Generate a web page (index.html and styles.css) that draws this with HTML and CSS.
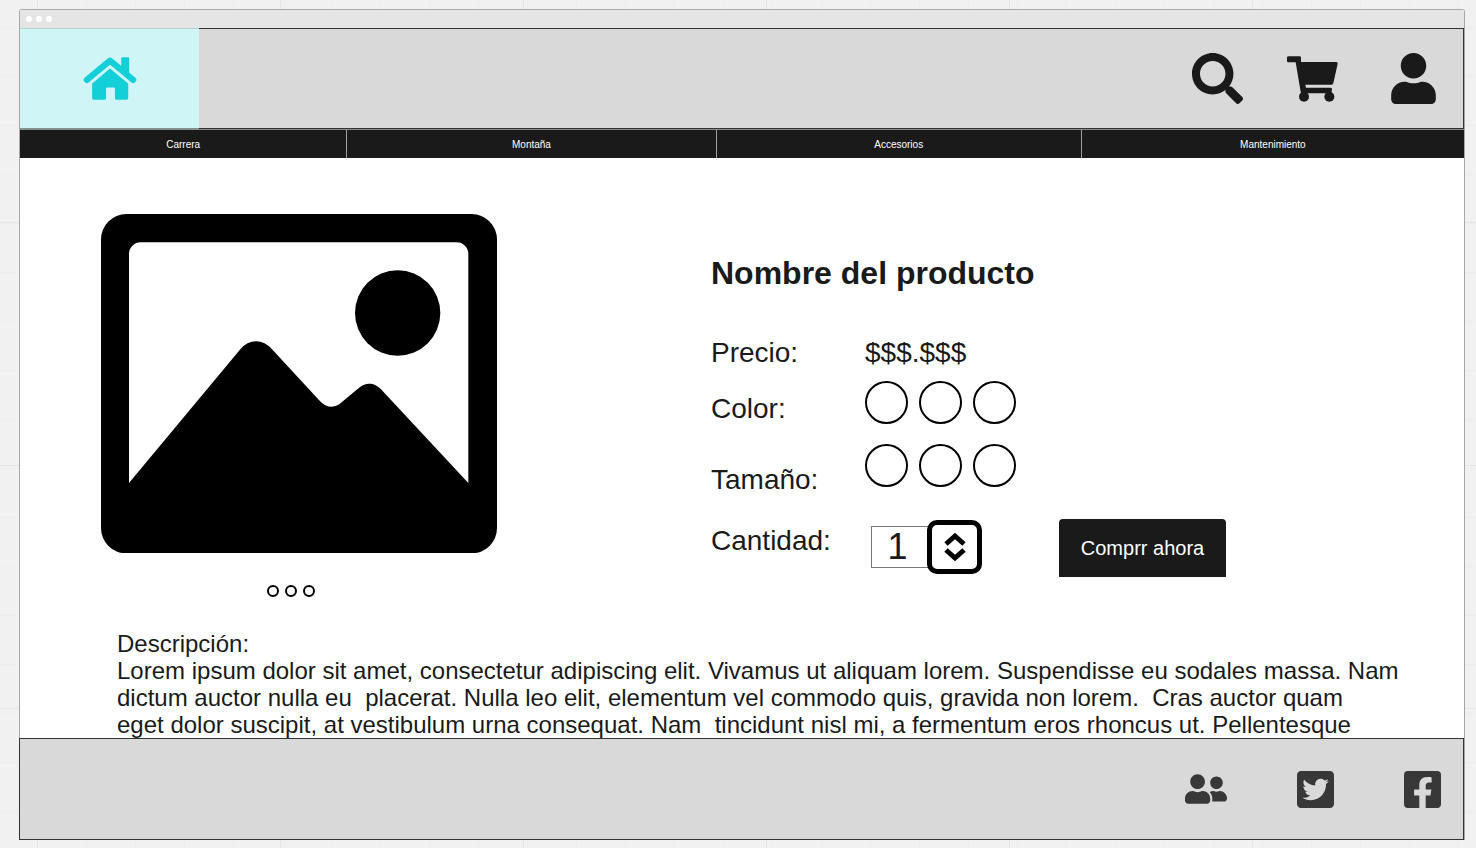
FILE: index.html
```html
<!DOCTYPE html>
<html lang="es">
<head>
<meta charset="utf-8">
<meta name="viewport" content="width=device-width, initial-scale=1">
<title>Nombre del producto</title>
<link rel="stylesheet" href="styles.css">
</head>
<body>
<div class="window">
  <div class="titlebar"><i></i><i></i><i></i></div>

  <header class="header">
    <a class="home" href="#" aria-label="Inicio">
      <svg viewBox="0 0 162 130" width="54" height="43">
        <g fill="#13cfd7">
          <path d="M11 69 81 11l70 58" fill="none" stroke="#13cfd7" stroke-width="19" stroke-linecap="round" stroke-linejoin="round"/>
          <path d="M115 4q0-3 3-3h18q3 0 3 3v54l-24-20z"/>
          <path d="M81 35 136 80v44q0 5-5 5h-31q-4 0-4-4V96q0-4-4-4H73q-4 0-4 4v29q0 4-4 4H32q-5 0-5-5V80z"/>
        </g>
      </svg>
    </a>
    <div class="actions">
      <button class="icon-button" type="button" aria-label="Buscar">
        <svg viewBox="0 0 512 512" width="51" height="51"><path d="M505 442.7L405.3 343c-4.500-4.500-10.600-7-17-7H372c27.600-35.300 44-79.700 44-128C416 93.100 322.900 0 208 0S0 93.100 0 208s93.100 208 208 208c48.300 0 92.700-16.400 128-44v16.300c0 6.400 2.500 12.500 7 17l99.700 99.700c9.400 9.400 24.600 9.400 33.900 0l28.300-28.300c9.400-9.400 9.400-24.600.1-34zM208 336c-70.700 0-128-57.200-128-128 0-70.700 57.200-128 128-128 70.700 0 128 57.200 128 128 0 70.700-57.200 128-128 128z"/></svg>
      </button>
      <button class="icon-button cart" type="button" aria-label="Carrito">
        <svg viewBox="0 0 153 138" width="51" height="46">
          <path d="M4 1h34q4 0 4 4v13h106q5 0 4 5l-13 59q-1 4-5 4H55l2 9h74q5 0 4 5l-2 12H46q-4 0-5-4L26 19H4q-4 0-4-4V5q0-4 4-4z"/>
          <circle cx="51" cy="122" r="15"/><circle cx="127" cy="122" r="15"/>
        </svg>
      </button>
      <button class="icon-button" type="button" aria-label="Cuenta">
        <svg viewBox="0 0 448 512" width="45" height="51"><path d="M224 256c70.700 0 128-57.300 128-128S294.700 0 224 0 96 57.300 96 128s57.300 128 128 128zm89.600 32h-16.700c-22.200 10.200-46.900 16-72.900 16s-50.600-5.800-72.900-16h-16.700C60.200 288 0 348.200 0 422.400V464c0 26.500 21.500 48 48 48h352c26.500 0 48-21.500 48-48v-41.600c0-74.200-60.200-134.400-134.400-134.400z"/></svg>
      </button>
    </div>
  </header>

  <nav class="nav">
    <a class="nav-carrera" href="#">Carrera</a>
    <a class="nav-montana" href="#">Montaña</a>
    <a class="nav-accesorios" href="#">Accesorios</a>
    <a class="nav-mantenimiento" href="#">Mantenimiento</a>
  </nav>

  <main class="main">
    <section class="product">
      <div class="gallery">
        <svg class="photo" viewBox="0 0 1188 1018" role="img" aria-label="Imagen del producto">
          <path fill-rule="evenodd" d="M76 0H1112A76 76 0 0 1 1188 76V942A76 76 0 0 1 1112 1018H76A76 76 0 0 1 0 942V76A76 76 0 0 1 76 0ZM84 807 418 406Q438 382 465 382Q492 382 513 406L656 560Q672 578 692 578Q708 578 722 565L776 520Q790 508 807 509Q824 509 840 526L1102 807V120A35 35 0 0 0 1067 85H119A35 35 0 0 0 84 120Z"/>
          <circle cx="890" cy="297" r="128"/>
        </svg>
        <div class="dots">
          <input type="radio" name="foto" aria-label="Foto 1">
          <input type="radio" name="foto" aria-label="Foto 2">
          <input type="radio" name="foto" aria-label="Foto 3">
        </div>
      </div>

      <form class="details">
        <h1 class="title">Nombre del producto</h1>
        <div class="row row-price">
          <span class="label">Precio:</span>
          <span class="price">$$$.$$$</span>
        </div>
        <div class="row row-color" role="radiogroup" aria-labelledby="color">
          <span class="label" id="color">Color:</span>
          <div class="options">
            <input type="radio" name="color" aria-label="Color 1">
            <input type="radio" name="color" aria-label="Color 2">
            <input type="radio" name="color" aria-label="Color 3">
          </div>
        </div>
        <div class="row row-size" role="radiogroup" aria-labelledby="size">
          <span class="label" id="size">Tamaño:</span>
          <div class="options">
            <input type="radio" name="size" aria-label="Tamaño 1">
            <input type="radio" name="size" aria-label="Tamaño 2">
            <input type="radio" name="size" aria-label="Tamaño 3">
          </div>
        </div>
        <div class="row row-quantity">
          <label class="label" for="quantity">Cantidad:</label>
          <div class="quantity">
            <input id="quantity" type="text" inputmode="numeric" value="1">
            <button class="stepper" type="button" aria-label="Cambiar cantidad">
              <svg viewBox="0 0 22 30" width="22" height="30"><path d="M2 12 11 4l9 8M2 18l9 8 9-8"/></svg>
            </button>
          </div>
          <button class="buy" type="button">Comprr ahora</button>
        </div>
      </form>
    </section>

    <section class="description">
      <h2>Descripción:</h2>
      <p>Lorem ipsum dolor sit amet, consectetur adipiscing elit. Vivamus ut aliquam lorem. Suspendisse eu sodales massa. Nam
dictum auctor nulla eu  placerat. Nulla leo elit, elementum vel commodo quis, gravida non lorem.  Cras auctor quam
eget dolor suscipit, at vestibulum urna consequat. Nam  tincidunt nisl mi, a fermentum eros rhoncus ut. Pellentesque</p>
    </section>
  </main>

  <footer class="footer">
    <a href="#" aria-label="Comunidad">
      <svg viewBox="0 32 640 448" width="42" height="30"><path d="M192 256c61.900 0 112-50.100 112-112S253.900 32 192 32 80 82.100 80 144s50.100 112 112 112zm76.800 32h-8.300c-20.800 10-43.900 16-68.500 16s-47.600-6-68.500-16h-8.300C51.600 288 0 339.600 0 403.200V432c0 26.500 21.500 48 48 48h288c26.500 0 48-21.500 48-48v-28.800c0-63.600-51.600-115.200-115.200-115.200zM480 256c53 0 96-43 96-96s-43-96-96-96-96 43-96 96 43 96 96 96zm48 32h-3.800c-13.900 4.800-28.600 8-44.200 8s-30.300-3.200-44.200-8H432c-20.400 0-39.200 5.900-55.700 15.400 24.400 26.300 39.700 61.200 39.700 99.800v38.400c0 2.200-.5 4.300-.6 6.400H592c26.500 0 48-21.500 48-48 0-61.900-50.100-112-112-112z"/></svg>
    </a>
    <a href="#" aria-label="Twitter">
      <svg viewBox="0 32 448 448" width="37" height="37"><path d="M400 32H48C21.500 32 0 53.500 0 80v352c0 26.500 21.500 48 48 48h352c26.500 0 48-21.500 48-48V80c0-26.500-21.500-48-48-48zm-48.900 158.800c.2 2.800.2 5.700.2 8.500 0 86.700-66 186.600-186.600 186.600-37.200 0-71.700-10.800-100.700-29.400 5.300.6 10.400.8 15.800.8 30.700 0 58.900-10.400 81.400-28-28.800-.6-53-19.500-61.300-45.500 10.100 1.500 19.200 1.500 29.600-1.200-30-6.100-52.500-32.500-52.500-64.400v-.8c8.700 4.900 18.900 7.900 29.600 8.300a65.447 65.447 0 0 1-29.200-54.600c0-12.200 3.200-23.400 8.900-33.100 32.300 39.800 80.800 65.800 135.200 68.600-9.300-44.500 24-80.600 64-80.600 18.900 0 35.900 7.900 47.900 20.700 14.800-2.800 29-8.300 41.600-15.800-4.900 15.200-15.200 28-28.800 36.100 13.200-1.400 26-5.100 37.800-10.200-8.900 13.100-20.100 24.700-32.900 34z"/></svg>
    </a>
    <a href="#" aria-label="Facebook">
      <svg viewBox="0 32 448 448" width="37" height="37"><path d="M400 32H48A48 48 0 0 0 0 80v352a48 48 0 0 0 48 48h137.250V327.690h-63V256h63v-54.640c0-62.150 37-96.480 93.670-96.480 27.140 0 55.520 4.840 55.520 4.840v61h-31.270c-30.810 0-40.420 19.120-40.420 38.730V256h68.780l-11 71.690h-57.780V480H400a48 48 0 0 0 48-48V80a48 48 0 0 0-48-48z"/></svg>
    </a>
  </footer>
</div>
</body>
</html>
```

FILE: styles.css
```css
* {
  box-sizing: border-box;
}

body {
  margin: 0;
  padding: 9px 11px 8px 19px;
  min-height: 100vh;
  display: flex;
  font-family: "Liberation Sans", Arial, sans-serif;
  color: #1a1a1a;
  background-color: #f1f1f1;
  background-image:
    linear-gradient(90deg, #e6e6e6 1px, transparent 1px),
    linear-gradient(#e6e6e6 1px, transparent 1px),
    linear-gradient(90deg, #ededed 1px, transparent 1px),
    linear-gradient(#ededed 1px, transparent 1px);
  background-size: 243px 243px, 243px 243px, 49px 49px, 49px 49px;
  background-position: 37px 0, 0 222px, 37px 0, 0 27px;
}

svg {
  display: block;
  fill: #1a1a1a;
}

a {
  color: inherit;
  text-decoration: none;
}

button,
input {
  margin: 0;
  padding: 0;
  font-family: inherit;
  color: inherit;
}

.window {
  flex: 1;
  min-width: 0;
  display: flex;
  flex-direction: column;
  background: #fff;
  border: 1px solid #a8a8a8;
  border-bottom: 0;
  border-radius: 3px 3px 0 0;
}

.titlebar {
  display: flex;
  align-items: center;
  gap: 4px;
  height: 18px;
  padding-left: 6px;
  background: #e5e5e5;
}

.titlebar i {
  width: 6px;
  height: 6px;
  border-radius: 50%;
  background: #fff;
}

.header {
  display: flex;
  justify-content: space-between;
  height: 101px;
  background: #d9d9d9;
  border: solid #333;
  border-width: 1px 1px 1px 0;
}

.home {
  display: flex;
  align-items: center;
  justify-content: center;
  width: 179px;
  margin: -1px 0;
  background: #cff5f6;
  border-top: 1px solid #b4d0d0;
  border-bottom: 1px solid #7f9394;
}

.actions {
  display: flex;
  align-items: center;
  gap: 44px;
  padding-right: 27px;
}

.icon-button {
  border: 0;
  background: none;
}

.cart {
  padding-right: 9px;
}

.nav {
  display: flex;
  height: 29px;
  background: #1a1a1a;
  border-top: 1px solid #8a8a8a;
  color: #fff;
  font-size: 10px;
}

.nav a {
  display: flex;
  align-items: center;
  justify-content: center;
  flex-basis: 0;
}

.nav a + a {
  border-left: 1px solid #a0a0a0;
}

.nav-carrera {
  flex-grow: 327;
}

.nav-montana {
  flex-grow: 369;
}

.nav-accesorios {
  flex-grow: 365;
}

.nav-mantenimiento {
  flex-grow: 383;
}

.main {
  flex: 1;
  padding: 56px 82px 0 81px;
}

.product {
  display: grid;
  grid-template-columns: 396px minmax(0, 671px);
  justify-content: space-between;
  column-gap: 48px;
}

.photo {
  width: 100%;
  fill: #000;
}

.dots {
  display: flex;
  justify-content: center;
  gap: 6px;
  padding: 32px 16px 0 0;
}

.dots input,
.options input {
  appearance: none;
  border: 2px solid #000;
  border-radius: 50%;
}

.dots input {
  width: 12px;
  height: 12px;
}

.title {
  margin: 41px 0 0;
  font-size: 32px;
  line-height: 36px;
}

.row {
  display: flex;
  align-items: flex-start;
  font-size: 28px;
  line-height: 32px;
}

.row-price {
  margin-top: 46px;
}

.row-color {
  height: 44px;
  margin-top: 12px;
}

.row-size {
  height: 52px;
  margin-top: 19px;
}

.row-quantity {
  margin-top: 23px;
}

.label {
  width: 154px;
}

.row-color .label,
.row-size .label {
  align-self: flex-end;
}

.row-quantity .label {
  padding-top: 6px;
}

.options {
  display: flex;
  gap: 11px;
}

.options input {
  width: 43px;
  height: 43px;
}

.quantity {
  display: flex;
  align-items: center;
  padding: 1px 0 0 6px;
}

.quantity input {
  width: 58px;
  height: 42px;
  padding-right: 5px;
  border: 1px solid #777;
  background: #fff;
  font-size: 36px;
  text-align: center;
}

.stepper {
  display: flex;
  align-items: center;
  justify-content: center;
  width: 55px;
  height: 54px;
  margin-left: -2px;
  border: 5px solid #000;
  border-radius: 10px;
  background: #fff;
}

.stepper svg {
  fill: none;
  stroke: #000;
  stroke-width: 5px;
}

.buy {
  width: 167px;
  height: 58px;
  margin-left: 77px;
  border: 0;
  border-radius: 4px 4px 0 0;
  background: #1a1a1a;
  color: #fff;
  font-size: 20px;
}

.description {
  margin-top: 33px;
  padding-left: 16px;
  font-size: 24px;
  line-height: 27px;
}

.description h2,
.description p {
  margin: 0;
  font-size: inherit;
  font-weight: 400;
}

.description p {
  margin-right: -24px;
  white-space: pre-wrap;
}

.footer {
  display: flex;
  align-items: center;
  justify-content: flex-end;
  gap: 70px;
  height: 102px;
  margin-left: -1px;
  padding-right: 22px;
  background: #d9d9d9;
  border: 1px solid #333;
}

.footer svg {
  fill: #383838;
}
```
